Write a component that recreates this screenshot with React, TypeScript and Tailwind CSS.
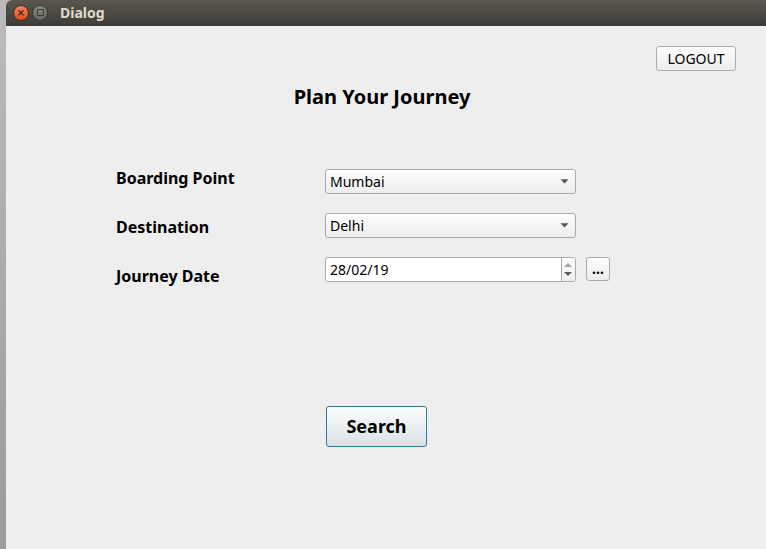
import { useState } from "react";

const CITIES = ["Mumbai", "Delhi", "Chennai", "Kolkata"];

function CitySelect({ id, initial }: { id: string; initial: string }) {
  const [city, setCity] = useState(initial);
  return (
    <div className="relative w-full max-w-[251px]">
      <select
        id={id}
        value={city}
        onChange={(e) => setCity(e.target.value)}
        className="block h-[25px] w-full appearance-none rounded-[3px] border border-[#aaaaaa] bg-linear-to-b from-[#fefefe] to-[#ededed] pr-6 pl-1 text-[14px] leading-[23px] text-black"
      >
        {CITIES.map((c) => (
          <option key={c}>{c}</option>
        ))}
      </select>
      <svg
        className="pointer-events-none absolute top-[10px] right-[7px] h-[5px] w-[9px]"
        viewBox="0 0 9 5"
        aria-hidden="true"
      >
        <path d="M0.5 0.2h8L4.5 4.6z" fill="#555555" />
      </svg>
    </div>
  );
}

function TitleBar() {
  return (
    <header className="flex h-[26px] items-center rounded-tl-md bg-linear-to-b from-[#5a574e] to-[#3e3d38] pl-[7px]">
      <button type="button" aria-label="Close" className="mr-[3px] block">
        <svg className="size-4" viewBox="0 0 16 16" aria-hidden="true">
          <defs>
            <linearGradient id="close" x2="0" y2="1">
              <stop stopColor="#f58563" />
              <stop offset="1" stopColor="#df4b1c" />
            </linearGradient>
          </defs>
          <circle cx="8" cy="8" r="7.5" fill="url(#close)" stroke="#3a3029" />
          <path d="M5.5 5.3l5 5M10.5 5.3l-5 5" stroke="#4b2a1d" strokeWidth="1.3" />
        </svg>
      </button>
      <button type="button" aria-label="Maximize" className="block">
        <svg className="size-4" viewBox="0 0 16 16" aria-hidden="true">
          <defs>
            <linearGradient id="maximize" x2="0" y2="1">
              <stop stopColor="#8c8b83" />
              <stop offset="1" stopColor="#65645d" />
            </linearGradient>
          </defs>
          <circle cx="8" cy="8" r="7.5" fill="url(#maximize)" stroke="#373631" />
          <rect x="5.5" y="4.5" width="6" height="6" fill="none" stroke="#3d3c37" />
        </svg>
      </button>
      <h1 className="ml-3 text-[14px] leading-5 font-bold text-[#dfdbd2]">Dialog</h1>
    </header>
  );
}

export default function App() {
  const [date, setDate] = useState("28/02/19");
  return (
    <div className="min-h-screen bg-linear-to-b from-[#bbbbbb] to-[#9b9b9b] pl-1.5 font-['Noto_Sans','Open_Sans',sans-serif] text-black">
      <div className="flex min-h-screen flex-col rounded-tl-md bg-[#eeeeee]">
        <TitleBar />
        <main className="flex-1 pt-5">
          <div className="flex justify-end pr-[30px]">
            <button
              type="button"
              className="h-[25px] w-20 rounded-[3px] border border-[#aaaaaa] bg-linear-to-b from-[#fefefe] to-[#ededed] text-[14px] leading-[23px]"
            >
              LOGOUT
            </button>
          </div>
          <h2 className="mt-3 pr-2 text-center text-[20px] leading-7 font-bold">Plan Your Journey</h2>
          <form className="mt-[55px] pl-[110px]" onSubmit={(e) => e.preventDefault()}>
            <div className="flex">
              <div className="flex w-[209px] shrink-0 flex-col gap-[25px] text-[16px] leading-6 font-bold">
                <label htmlFor="boarding">Boarding Point</label>
                <label htmlFor="destination">Destination</label>
                <label htmlFor="date">Journey Date</label>
              </div>
              <div className="flex min-w-0 flex-1 flex-col gap-[19px] pt-[3px]">
                <CitySelect id="boarding" initial="Mumbai" />
                <CitySelect id="destination" initial="Delhi" />
                <div className="flex items-start gap-2.5">
                  <div className="flex h-[25px] w-full max-w-[251px] overflow-hidden rounded-[3px] border border-[#aaaaaa] bg-white">
                    <input
                      id="date"
                      type="text"
                      value={date}
                      onChange={(e) => setDate(e.target.value)}
                      className="min-w-0 flex-1 pt-px pl-1 text-[14px] leading-[22px] outline-none"
                    />
                    <div className="flex w-3.5 flex-col border-l border-[#aaaaaa] bg-linear-to-b from-[#fefefe] to-[#ededed] pr-px">
                      <button type="button" aria-label="Next day" className="flex flex-1 items-end justify-center pb-0.5">
                        <svg className="h-1 w-2" viewBox="0 0 8 4" aria-hidden="true">
                          <path d="M0 4h8L4 0z" fill="#a5a5a5" />
                        </svg>
                      </button>
                      <button type="button" aria-label="Previous day" className="flex flex-1 items-start justify-center pt-[3px]">
                        <svg className="h-1 w-2" viewBox="0 0 8 4" aria-hidden="true">
                          <path d="M0 0h8L4 4z" fill="#5b5b5b" />
                        </svg>
                      </button>
                    </div>
                  </div>
                  <button
                    type="button"
                    aria-label="Choose date"
                    className="size-6 shrink-0 rounded-[3px] border border-[#aaaaaa] bg-linear-to-b from-[#fefefe] to-[#ededed] text-[14px] leading-[22px] font-bold"
                  >
                    ...
                  </button>
                </div>
              </div>
            </div>
            <button
              type="submit"
              className="mt-[118px] ml-[210px] h-[41px] w-[101px] rounded-[3px] border border-[#2a79a3] bg-linear-to-b from-[#fdfeff] to-[#d9e1e5] text-[18px] leading-[39px] font-bold"
            >
              Search
            </button>
          </form>
        </main>
      </div>
    </div>
  );
}
